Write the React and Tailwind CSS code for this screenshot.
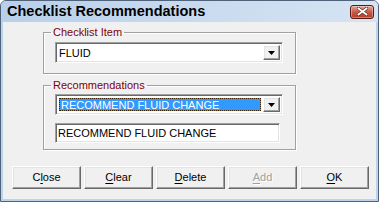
import React from "react";

const sunken =
  "border border-t-[#a0a0a0] border-l-[#a0a0a0] border-b-white border-r-white shadow-[inset_1px_1px_0_#696969,inset_-1px_-1px_0_#e3e3e3]";
const raised =
  "border border-t-white border-l-white border-b-[#696969] border-r-[#696969] shadow-[inset_-1px_-1px_0_#a0a0a0,inset_1px_1px_0_#e3e3e3] bg-[#f0f0f0]";

function DropButton() {
  return (
    <div className={`w-[17px] h-full flex items-center justify-center ${raised}`}>
      <svg width="7" height="4" viewBox="0 0 7 4">
        <path d="M0 0h7L3.5 4z" fill="#000" />
      </svg>
    </div>
  );
}

function Combo({ children }) {
  return (
    <div className={`w-[228px] h-[21px] bg-white flex p-[2px] ${sunken}`}>
      <div className="flex-1 flex items-stretch min-w-0">{children}</div>
      <DropButton />
    </div>
  );
}

function Btn({ label, u, disabled }) {
  const i = label.indexOf(u);
  return (
    <button
      type="button"
      className={`w-[69px] h-[23px] text-[11px] font-normal leading-none ${raised} ${
        disabled ? "text-[#a0a0a0] [text-shadow:1px_1px_0_#fff]" : "text-black"
      }`}
    >
      {label.slice(0, i)}
      <span className="underline underline-offset-[2px]">{u}</span>
      {label.slice(i + 1)}
    </button>
  );
}

export default function App() {
  return (
    <div className="w-[379px] h-[202px] bg-white font-['Liberation_Sans',Arial,sans-serif]">
      <div className="w-full h-full flex flex-col border border-[#4f627a] rounded-t-[6px] bg-[#bcd3ec] overflow-hidden">
        {/* Title bar */}
        <div className="h-[21px] flex items-center justify-between pl-[6px] pr-[4px] bg-[linear-gradient(90deg,#b9d0ea,#d6e4f3)]">
          <span className="text-[14.5px] font-bold text-black leading-none">
            Checklist Recommendations
          </span>
          <div className="w-[24px] h-[14px] rounded-[3px] border border-[#5a1a14] bg-[linear-gradient(#e8a898,#c85a48_50%,#b83a28)] flex items-center justify-center shadow-[inset_0_0_0_1px_rgba(255,255,255,0.35)]">
            <svg width="11" height="9" viewBox="0 0 11 9">
              <path
                d="M1.5 1.5l8 6M9.5 1.5l-8 6"
                stroke="#5a2a20"
                strokeWidth="3.2"
                strokeLinecap="square"
              />
              <path
                d="M1.5 1.5l8 6M9.5 1.5l-8 6"
                stroke="#fff"
                strokeWidth="1.8"
                strokeLinecap="square"
              />
            </svg>
          </div>
        </div>

        {/* Body */}
        <div className="flex-1 mx-[2px] mb-[2px] bg-[#f0f0f0] text-[11px] text-black">
          <fieldset className="ml-[40px] mt-[4px] w-[253px] p-0 border border-[#a0a0a0] shadow-[inset_1px_1px_0_#fff,1px_1px_0_#fff]">
            <legend className="ml-[7px] px-[2px] text-[#800000] leading-[13px]">
              Checklist Item
            </legend>
            <div className="pl-[11px] pt-[3px] pb-[10px]">
              <Combo>
                <span className="pl-[1px] leading-[17px]">FLUID</span>
              </Combo>
            </div>
          </fieldset>

          <fieldset className="ml-[40px] mt-[5px] w-[253px] p-0 border border-[#a0a0a0] shadow-[inset_1px_1px_0_#fff,1px_1px_0_#fff]">
            <legend className="ml-[7px] px-[2px] text-[#800000] leading-[13px]">
              Recommendations
            </legend>
            <div className="pl-[11px] pt-[2px] pb-[6px]">
              <Combo>
                <div className="flex-1 m-[1px] mr-[2px] bg-[#3399ff] border border-dotted border-[#3a2000] text-white pl-[1px] leading-[13px] whitespace-nowrap overflow-hidden">
                  RECOMMEND FLUID CHANGE
                </div>
              </Combo>
              <div
                className={`mt-[8px] w-[225px] h-[20px] bg-white pl-[2px] leading-[18px] whitespace-nowrap overflow-hidden ${sunken}`}
              >
                RECOMMEND FLUID CHANGE
              </div>
            </div>
          </fieldset>

          <div className="ml-[9px] mt-[16px] flex gap-[3px]">
            <Btn label="Close" u="l" />
            <Btn label="Clear" u="C" />
            <Btn label="Delete" u="D" />
            <Btn label="Add" u="A" disabled />
            <Btn label="OK" u="O" />
          </div>
        </div>
      </div>
    </div>
  );
}
